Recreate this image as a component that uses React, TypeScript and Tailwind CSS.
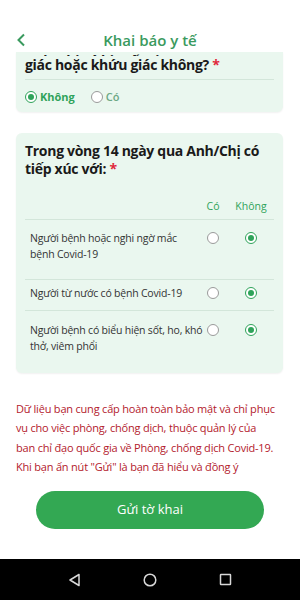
import React from 'react';

function Radio({ checked }: { checked: boolean }) {
  return (
    <span
      className={`flex items-center justify-center w-[12px] h-[12px] rounded-full border bg-white shrink-0 ${
        checked ? 'border-[#2fa35a]' : 'border-[#9a9a9a]'
      }`}
    >
      {checked && <span className="w-[6px] h-[6px] rounded-full bg-[#2fa35a]" />}
    </span>
  );
}

const rows = [
  { lines: ['Người bệnh hoặc nghi ngờ mắc', 'bệnh Covid-19'], pad: 'pt-[10px] pb-[17px]' },
  { lines: ['Người từ nước có bệnh Covid-19'], pad: 'pt-[5px] pb-[9px]' },
  { lines: ['Người bệnh có biểu hiện sốt, ho, khó', 'thở, viêm phổi'], pad: 'pt-[11px] pb-[19px]' },
];

export default function App() {
  return (
    <div className="w-full h-[600px] flex flex-col bg-white font-['Open_Sans',sans-serif] overflow-hidden">
      {/* header */}
      <div className="relative z-10 bg-white pt-[28px] h-[52px] flex items-center justify-center">
        <svg className="absolute left-[16px] top-[33px]" width="10" height="14" viewBox="0 0 10 14">
          <path d="M8 1.5 L2.5 7 L8 12.5" fill="none" stroke="#3a9a5e" strokeWidth="2" />
        </svg>
        <span className="text-[15px] leading-[20px] font-semibold text-[#3a9a5e]">Khai báo y tế</span>
      </div>

      <div className="flex-1 flex flex-col">
        {/* card 1, scrolled under the header */}
        <div className="ml-[16px] w-[267px] bg-[#eaf7ef] rounded-b-[6px] px-[9px] shadow-[0_1px_2px_rgba(0,0,0,0.06)]">
          <div className="h-[4px] overflow-hidden relative" aria-hidden="true">
            <div className="absolute bottom-[-14px] left-0 whitespace-nowrap text-[14px] leading-[18px] font-bold tracking-[-0.3px] text-[#1a1a1a]">
              Anh/Chị có bị mất vị
            </div>
          </div>
          <div className="text-[14px] leading-[18px] font-bold tracking-[-0.3px] text-[#1a1a1a]">
            giác hoặc khứu giác không? <span className="text-[#e0283c]">*</span>
          </div>
          <div className="mt-[5px] h-px bg-[#d3e6da]" />
          <div className="flex items-center h-[32px] pt-[2px]">
            <div className="flex items-center gap-[3px]">
              <Radio checked />
              <span className="text-[11px] font-bold text-[#2fa35a]">Không</span>
            </div>
            <div className="flex items-center gap-[3px] ml-[16px]">
              <Radio checked={false} />
              <span className="text-[11px] font-semibold text-[#6aa884]">Có</span>
            </div>
          </div>
        </div>

        {/* card 2 */}
        <div className="mt-[21px] ml-[16px] w-[267px] bg-[#eaf7ef] rounded-[6px] px-[9px] pt-[9px] shadow-[0_1px_2px_rgba(0,0,0,0.06)]">
          <div className="text-[14px] leading-[18px] font-bold tracking-[-0.3px] text-[#1a1a1a] whitespace-nowrap">
            Trong vòng 14 ngày qua Anh/Chị có
            <br />
            tiếp xúc với: <span className="text-[#e0283c]">*</span>
          </div>
          <div className="mt-[20px] flex justify-end pr-[4px] text-[10.5px] leading-[16px] text-[#2fa35a]">
            <span className="w-[38px] text-center">Có</span>
            <span className="w-[38px] text-center">Không</span>
          </div>
          <div className="mt-[5px] h-px bg-[#d3e6da]" />
          {rows.map((row, i) => (
            <div key={i}>
              {i > 0 && <div className="h-px bg-[#d3e6da]" />}
              <div className={`flex items-start ${row.pad}`}>
                <div className="flex-1 min-w-0 pl-[5px] text-[10.5px] leading-[16px] tracking-[-0.2px] text-[#333333] whitespace-nowrap">
                  {row.lines.map((l, j) => (
                    <div key={j}>{l}</div>
                  ))}
                </div>
                <div className="flex shrink-0 pr-[4px] pt-[2px]">
                  <span className="w-[38px] flex justify-center">
                    <Radio checked={false} />
                  </span>
                  <span className="w-[38px] flex justify-center">
                    <Radio checked />
                  </span>
                </div>
              </div>
            </div>
          ))}
        </div>

        {/* notice */}
        <div className="mt-[26px] px-[16px] text-[11px] leading-[19.3px] tracking-[-0.2px] text-[#b3202c] whitespace-nowrap">
          Dữ liệu bạn cung cấp hoàn toàn bảo mật và chỉ phục
          <br />
          vụ cho việc phòng, chống dịch, thuộc quản lý của
          <br />
          ban chỉ đạo quốc gia về Phòng, chống dịch Covid-19.
          <br />
          Khi bạn ấn nút "Gửi" là bạn đã hiểu và đồng ý
        </div>

        <div className="mt-[15px] flex justify-center">
          <button className="w-[228px] h-[38px] rounded-full bg-[#33a853] text-white text-[13px]">
            Gửi tờ khai
          </button>
        </div>
      </div>

      {/* android nav bar */}
      <div className="h-[41px] bg-black flex items-center justify-center gap-[62px]">
        <svg width="13" height="14" viewBox="0 0 13 14">
          <path d="M11 1.5 L2 7 L11 12.5 Z" fill="none" stroke="#d8d8d8" strokeWidth="1.5" strokeLinejoin="round" />
        </svg>
        <svg width="14" height="14" viewBox="0 0 14 14">
          <circle cx="7" cy="7" r="5.8" fill="none" stroke="#d8d8d8" strokeWidth="1.5" />
        </svg>
        <svg width="13" height="13" viewBox="0 0 13 13">
          <rect x="1.5" y="1.5" width="10" height="10" rx="0.5" fill="none" stroke="#d8d8d8" strokeWidth="1.5" />
        </svg>
      </div>
    </div>
  );
}
